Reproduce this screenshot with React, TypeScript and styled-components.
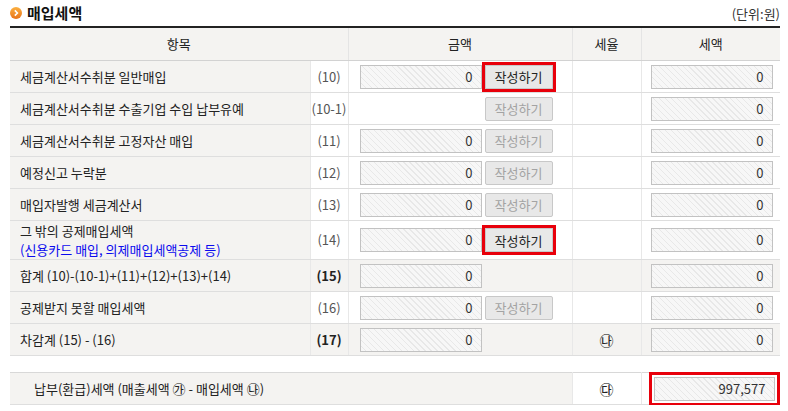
import React from "react"
import styled, { createGlobalStyle } from "styled-components"

const GlobalStyle = createGlobalStyle`
  body {
    margin: 0;
    background: #fff;
    font-family: "Noto Sans CJK KR", "Noto Sans", sans-serif;
    font-size: 13px;
    color: #222;
  }
`

const SPage = styled.div`
  width: 770px;
  padding: 0 8px 0 10px;
`

const STitleBar = styled.div`
  display: flex;
  align-items: center;
  justify-content: space-between;
  height: 26px;
`

const STitle = styled.h2`
  display: flex;
  align-items: center;
  gap: 5px;
  margin: 0;
  font-size: 15px;
  font-weight: 700;
  color: #111;
  line-height: 20px;
`

const SUnit = styled.span`
  font-size: 13px;
  color: #333;
`

const STable = styled.table`
  width: 770px;
  border-collapse: collapse;
  table-layout: fixed;
  border-top: 2px solid #222;
  border-bottom: 1px solid #c8c8c8;
  line-height: 16px;
`

const SResultTable = styled(STable)`
  margin-top: 16px;
  border-top: 1px solid #d8d8d8;
  border-bottom: 1px solid #d8d8d8;
`

const SRow = styled.tr<{ $tall?: boolean; $shade?: boolean }>`
  height: ${({ $tall }) => ($tall ? "39px" : "32px")};
  background: ${({ $shade }) => ($shade ? "#f4f3f1" : "#fff")};

  & > td {
    border-bottom: 1px solid #dedede;
  }
`

const SHeadCell = styled.th`
  height: 32px;
  padding: 0;
  background: #f4f3f1;
  font-weight: 400;
  color: #222;
  border-left: 1px solid #e4e4e4;
  border-bottom: 1px solid #d2d2d2;

  &:first-child {
    border-left: none;
  }
`

const SLabelCell = styled.td<{ $indent?: number }>`
  padding: 0 0 0 ${({ $indent }) => $indent ?? 10}px;
  background: #f4f3f1;
  text-align: left;
  color: #222;
  white-space: nowrap;
`

const SLabelLines = styled.div`
  display: flex;
  flex-direction: column;
  gap: 3px;
  line-height: 16px;
`

const SNote = styled.span`
  color: #0a0aee;
`

const SCodeCell = styled.td<{ $bold?: boolean }>`
  padding: 0;
  text-align: center;
  color: ${({ $bold }) => ($bold ? "#222" : "#555")};
  font-weight: ${({ $bold }) => ($bold ? 700 : 400)};
  border-left: 1px solid #e8e8e8;
`

const SAmountCell = styled.td`
  padding: 0 0 0 11px;
  border-left: 1px solid #e8e8e8;
`

const SAmountBox = styled.div`
  display: flex;
  align-items: center;
  gap: 3px;
`

const SRateCell = styled.td`
  padding: 0;
  text-align: center;
  font-size: 14px;
  border-left: 1px solid #e8e8e8;
`

const STaxCell = styled.td<{ $pad?: number }>`
  padding: 0 0 0 ${({ $pad }) => $pad ?? 9}px;
  border-left: 1px solid #e8e8e8;
`

const SField = styled.div<{ $mark?: boolean }>`
  display: flex;
  align-items: center;
  justify-content: flex-end;
  box-sizing: border-box;
  width: ${({ $mark }) => ($mark ? "121px" : "122px")};
  height: 24px;
  padding-right: 8px;
  border: 1px solid #c2c2c2;
  background: repeating-linear-gradient(45deg, #f7f7f7 0 3.2px, #e8e8e8 3.2px 4.2px);
  color: #333;
  outline: ${({ $mark }) => ($mark ? "3px solid #e8000b" : "none")};
  outline-offset: 2px;
`

const SFieldSlot = styled.div`
  width: 122px;
  height: 24px;
`

const SWriteButton = styled.button<{ $active?: boolean }>`
  box-sizing: border-box;
  width: 68px;
  height: 24px;
  padding: 0;
  border: 1px solid #c8c8c8;
  border-radius: ${({ $active }) => ($active ? "0" : "2px")};
  background: #e8e8e8;
  font-family: inherit;
  font-size: 13px;
  color: ${({ $active }) => ($active ? "#222" : "#a3a3a3")};
  outline: ${({ $active }) => ($active ? "3px solid #e8000b" : "none")};
  outline-offset: 0;
`

const TitleIcon = () => (
  <svg width="12" height="12" viewBox="0 0 12 12">
    <defs>
      <linearGradient id="ico" x1="0" y1="0" x2="0" y2="1">
        <stop offset="0" stopColor="#fbb040" />
        <stop offset="1" stopColor="#e8731a" />
      </linearGradient>
    </defs>
    <circle cx="6" cy="6" r="6" fill="url(#ico)" />
    <path d="M4.8 3.4 L7.4 6 L4.8 8.6" fill="none" stroke="#fff" strokeWidth="1.6" />
  </svg>
)

type Row = {
  label: React.ReactNode
  code: string
  field?: boolean
  button?: "active" | "disabled"
  total?: boolean
  tall?: boolean
  rate?: string
}

const rows: Row[] = [
  { label: "세금계산서수취분 일반매입", code: "(10)", field: true, button: "active" },
  { label: "세금계산서수취분 수출기업 수입 납부유예", code: "(10-1)", button: "disabled" },
  { label: "세금계산서수취분 고정자산 매입", code: "(11)", field: true, button: "disabled" },
  { label: "예정신고 누락분", code: "(12)", field: true, button: "disabled" },
  { label: "매입자발행 세금계산서", code: "(13)", field: true, button: "disabled" },
  {
    label: (
      <SLabelLines>
        <span>그 밖의 공제매입세액</span>
        <SNote>(신용카드 매입, 의제매입세액공제 등)</SNote>
      </SLabelLines>
    ),
    code: "(14)",
    field: true,
    button: "active",
    tall: true,
  },
  { label: "합계 (10)-(10-1)+(11)+(12)+(13)+(14)", code: "(15)", field: true, total: true },
  { label: "공제받지 못할 매입세액", code: "(16)", field: true, button: "disabled" },
  { label: "차감계 (15) - (16)", code: "(17)", field: true, total: true, rate: "㉯" },
]

const App = () => {
  return (
    <SPage>
      <GlobalStyle />
      <STitleBar>
        <STitle>
          <TitleIcon />
          매입세액
        </STitle>
        <SUnit>(단위:원)</SUnit>
      </STitleBar>

      <STable>
        <colgroup>
          <col style={{ width: 300 }} />
          <col style={{ width: 38 }} />
          <col style={{ width: 224 }} />
          <col style={{ width: 69 }} />
          <col style={{ width: 139 }} />
        </colgroup>
        <thead>
          <tr>
            <SHeadCell colSpan={2}>항목</SHeadCell>
            <SHeadCell>금액</SHeadCell>
            <SHeadCell>세율</SHeadCell>
            <SHeadCell>세액</SHeadCell>
          </tr>
        </thead>
        <tbody>
          {rows.map((row) => (
            <SRow key={row.code} $tall={row.tall} $shade={row.total}>
              <SLabelCell>{row.label}</SLabelCell>
              <SCodeCell $bold={row.total}>{row.code}</SCodeCell>
              <SAmountCell>
                <SAmountBox>
                  {row.field ? <SField>0</SField> : <SFieldSlot />}
                  {row.button && (
                    <SWriteButton $active={row.button === "active"}>작성하기</SWriteButton>
                  )}
                </SAmountBox>
              </SAmountCell>
              <SRateCell>{row.rate}</SRateCell>
              <STaxCell>
                <SField>0</SField>
              </STaxCell>
            </SRow>
          ))}
        </tbody>
      </STable>

      <SResultTable>
        <colgroup>
          <col style={{ width: 562 }} />
          <col style={{ width: 69 }} />
          <col style={{ width: 139 }} />
        </colgroup>
        <tbody>
          <SRow>
            <SLabelCell $indent={24}>납부(환급)세액 (매출세액 ㉮ - 매입세액 ㉯)</SLabelCell>
            <SRateCell>㉰</SRateCell>
            <STaxCell $pad={12}>
              <SField $mark>997,577</SField>
            </STaxCell>
          </SRow>
        </tbody>
      </SResultTable>
    </SPage>
  )
}

export default App
